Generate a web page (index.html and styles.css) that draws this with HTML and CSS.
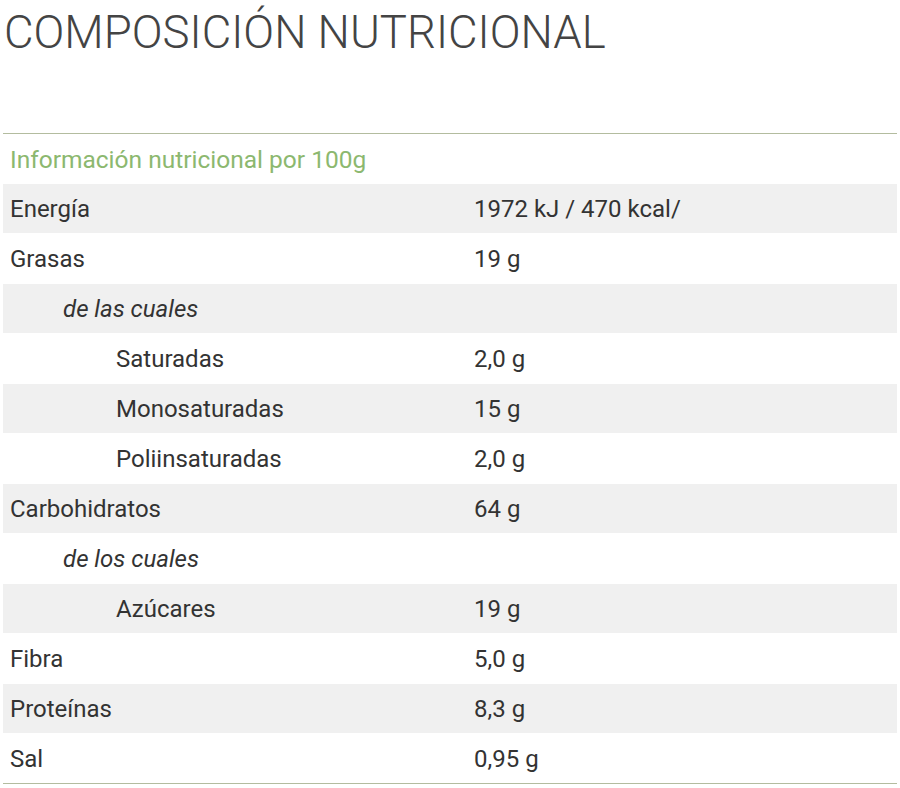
FILE: index.html
```html
<!DOCTYPE html>
<html lang="es">
<head>
<meta charset="utf-8">
<link rel="stylesheet" href="styles.css">
</head>
<body>
<h1 class="title">COMPOSICIÓN NUTRICIONAL</h1>
<table class="nutri">
  <thead>
    <tr><th colspan="2">Información nutricional por 100g</th></tr>
  </thead>
  <tbody>
    <tr class="alt"><td>Energía</td><td class="val">1972 kJ / 470 kcal/</td></tr>
    <tr><td>Grasas</td><td class="val">19 g</td></tr>
    <tr class="alt"><td class="sub"><em>de las cuales</em></td><td class="val"></td></tr>
    <tr><td class="sub2">Saturadas</td><td class="val">2,0 g</td></tr>
    <tr class="alt"><td class="sub2">Monosaturadas</td><td class="val">15 g</td></tr>
    <tr><td class="sub2">Poliinsaturadas</td><td class="val">2,0 g</td></tr>
    <tr class="alt"><td>Carbohidratos</td><td class="val">64 g</td></tr>
    <tr><td class="sub"><em>de los cuales</em></td><td class="val"></td></tr>
    <tr class="alt"><td class="sub2">Azúcares</td><td class="val">19 g</td></tr>
    <tr><td>Fibra</td><td class="val">5,0 g</td></tr>
    <tr class="alt"><td>Proteínas</td><td class="val">8,3 g</td></tr>
    <tr class="last"><td>Sal</td><td class="val">0,95 g</td></tr>
  </tbody>
</table>
</body>
</html>
```
FILE: styles.css
```css
html, body {
  margin: 0;
  padding: 0;
  background: #fff;
}
body {
  font-family: Roboto, "Liberation Sans", sans-serif;
  color: #333;
}
.title {
  margin: 0;
  padding: 6px 0 0 4px;
  height: 133px;
  box-sizing: border-box;
  font-weight: 300;
  font-size: 45.5px;
  line-height: 54px;
  color: #444;
}
.nutri {
  margin: 0 3px;
  width: 894px;
  border-collapse: separate;
  border-spacing: 0;
  border-top: 1px solid #b3bc9f;
  font-size: 24px;
}
.nutri th {
  text-align: left;
  font-weight: 400;
  font-size: 24.5px;
  color: #8cb86f;
  height: 50px;
  padding: 0 0 0 7px;
  box-sizing: border-box;
}
.nutri td {
  height: 50px;
  padding: 0 0 0 7px;
  box-sizing: border-box;
  border-bottom: 1px solid #fff;
  vertical-align: middle;
}
.nutri tr.alt td {
  background: #f0f0f0;
}
.nutri tr.last td {
  border-bottom-color: #b3bc9f;
}
.nutri td.val {
  width: 423px;
  padding-left: 0;
}
.nutri td.sub {
  padding-left: 60px;
}
.nutri td.sub2 {
  padding-left: 113px;
}
.nutri em {
  font-style: italic;
}
```
